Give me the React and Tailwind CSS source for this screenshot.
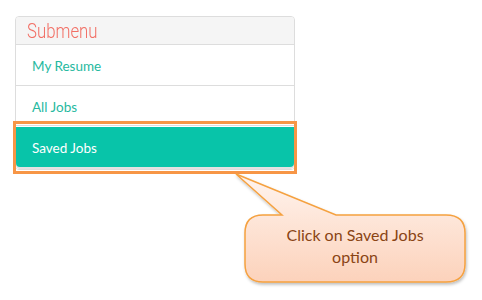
export default function App() {
  return (
    <div className="relative w-[482px] h-[300px] bg-white overflow-hidden" style={{ fontFamily: "Lato, 'Open Sans', sans-serif" }}>
      {/* Submenu panel */}
      <div className="ml-[15px] pt-[16px] w-[280px]">
        <div className="border border-[#dddddd] rounded-[4px] overflow-hidden bg-white">
          <div className="h-[28px] bg-[#f5f5f5] border-b border-[#dddddd] pl-[11px] flex items-center">
            <span className="inline-block origin-left scale-x-[0.84] text-[20px] font-light text-[#f26f65] leading-none" style={{ fontFamily: "Roboto, sans-serif" }}>
              Submenu
            </span>
          </div>
          <div className="h-[41px] border-b border-[#dddddd] pl-[16px] pt-[3px] flex items-center text-[13.5px] text-[#26b9a0]">
            My Resume
          </div>
          <div className="h-[40px] border-b border-[#dddddd] pl-[16px] pt-[3px] flex items-center text-[13.5px] text-[#26b9a0]">
            All Jobs
          </div>
          <div className="pt-[1px] pb-[2px] bg-white">
            <div className="h-[40px] bg-[#08c4a9] rounded-b-[4px] pl-[16px] pt-[3px] flex items-center text-[13.5px] text-white shadow-[0_2px_0_#e2e2e2]">
              Saved Jobs
            </div>
          </div>
        </div>
      </div>

      {/* Highlight box */}
      <div className="absolute left-[13px] top-[121px] w-[284px] h-[53px] border-[3px] border-[#f79646]" />

      {/* Callout drawing */}
      <svg className="absolute left-0 top-0 pointer-events-none" width="482" height="300" viewBox="0 0 482 300">
        <defs>
          <linearGradient id="calloutFill" x1="0" y1="0" x2="0" y2="1">
            <stop offset="0" stopColor="#fff4ee" />
            <stop offset="1" stopColor="#fcd2bb" />
          </linearGradient>
          <filter id="calloutShadow" x="-10%" y="-10%" width="130%" height="140%">
            <feDropShadow dx="1" dy="2" stdDeviation="1.5" floodColor="#000" floodOpacity="0.25" />
          </filter>
        </defs>
        <path
          d="M263 215 L282 215 L236 174 L336 215 L446 215 Q465 215 465 233 L465 264 Q465 282 446 282 L263 282 Q245 282 245 264 L245 233 Q245 215 263 215 Z"
          fill="url(#calloutFill)"
          stroke="#f5a13f"
          strokeWidth="1.5"
          filter="url(#calloutShadow)"
        />
      </svg>

      {/* Callout text */}
      <div className="absolute left-[245px] top-[215px] w-[220px] h-[67px] flex flex-col items-center justify-center pb-[6px] text-[16px] leading-[22px] text-[#8a4414] text-center">
        <span>Click on Saved Jobs</span>
        <span>option</span>
      </div>
    </div>
  );
}
